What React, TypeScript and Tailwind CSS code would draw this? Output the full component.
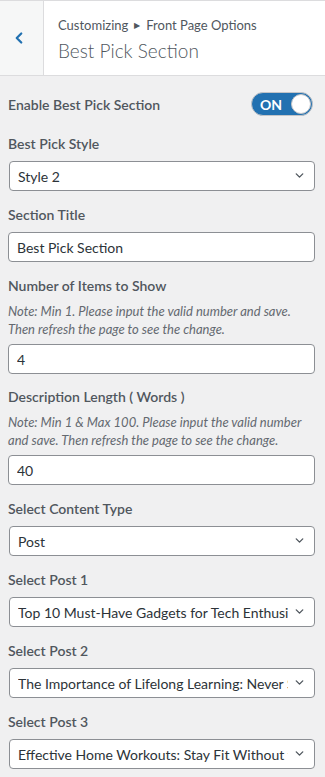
import { ChevronLeft, ChevronDown } from 'lucide-react';

const font = { fontFamily: 'Lato, "Open Sans", sans-serif' };

function Label({ children }: { children: React.ReactNode }) {
    return <div className="text-[14px] leading-[20px] font-semibold text-[#50575e] mb-[7px]">{children}</div>;
}

function Note({ children }: { children: React.ReactNode }) {
    return <div className="text-[13px] leading-[18px] italic text-[#646970] -mt-[1px] mb-[6px]">{children}</div>;
}

function Select({ value }: { value: string }) {
    return (
        <div className="relative ml-px">
            <select
                defaultValue={value}
                className="w-full h-[30px] appearance-none bg-white border border-[#8c8f94] rounded-[4px] pl-[8px] pr-[26px] text-[14px] text-[#2c3338] overflow-hidden text-clip whitespace-nowrap outline-none"
            >
                <option>{value}</option>
            </select>
            <ChevronDown className="absolute right-[9px] top-[8px] w-[13px] h-[13px] text-[#50575e] pointer-events-none" strokeWidth={2.5} />
        </div>
    );
}

function Input({ value }: { value: string }) {
    return (
        <input
            defaultValue={value}
            className="w-full h-[30px] bg-white border border-[#8c8f94] rounded-[4px] px-[8px] text-[14px] text-[#2c3338] outline-none"
        />
    );
}

export default function App() {
    return (
        <div className="w-[325px] min-h-[777px] bg-[#f0f0f1]" style={font}>
            {/* Header */}
            <div className="flex h-[76px] bg-white border-t border-b border-[#dcdcde]">
                <div className="w-[44px] flex items-center pl-[10px] bg-[#f6f7f7] border-r border-[#dcdcde]">
                    <ChevronLeft className="w-[18px] h-[18px] text-[#2271b1]" strokeWidth={3} />
                </div>
                <div className="pl-[14px] pt-[14px]">
                    <div className="text-[13px] leading-[20px] text-[#50575e] flex items-center gap-[6px]">
                        Customizing <span className="text-[8px]">▶</span> Front Page Options
                    </div>
                    <div className="text-[19px] leading-[28px] font-light text-[#50575e] mt-[2px]">Best Pick Section</div>
                </div>
            </div>

            <div className="pl-[8px] pr-[10px] pt-[16px]">
                {/* Toggle */}
                <div className="flex items-center justify-between h-[24px] mb-[18px]">
                    <div className="text-[14px] font-semibold text-[#50575e]">Enable Best Pick Section</div>
                    <div className="w-[62px] h-[24px] rounded-full bg-[#2271b1] border border-[#c3c4c7] flex items-center justify-between pl-[8px] pr-[1px] mr-[2px]">
                        <span className="text-[14px] font-bold text-white">ON</span>
                        <span className="w-[20px] h-[20px] rounded-full bg-white border border-[#c3c4c7]" />
                    </div>
                </div>

                <div className="mb-[14px]">
                    <Label>Best Pick Style</Label>
                    <Select value="Style 2" />
                </div>

                <div className="mb-[14px]">
                    <Label>Section Title</Label>
                    <Input value="Best Pick Section" />
                </div>

                <div className="mb-[13px]">
                    <Label>Number of Items to Show</Label>
                    <Note>Note: Min 1. Please input the valid number and save. Then refresh the page to see the change.</Note>
                    <Input value="4" />
                </div>

                <div className="mb-[14px]">
                    <Label>Description Length ( Words )</Label>
                    <Note>Note: Min 1 &amp; Max 100. Please input the valid number and save. Then refresh the page to see the change.</Note>
                    <Input value="40" />
                </div>

                <div className="mb-[14px]">
                    <Label>Select Content Type</Label>
                    <Select value="Post" />
                </div>

                <div className="mb-[14px]">
                    <Label>Select Post 1</Label>
                    <Select value="Top 10 Must-Have Gadgets for Tech Enthusiasts" />
                </div>

                <div className="mb-[14px]">
                    <Label>Select Post 2</Label>
                    <Select value="The Importance of Lifelong Learning: Never Stop Growing" />
                </div>

                <div className="mb-[14px]">
                    <Label>Select Post 3</Label>
                    <Select value="Effective Home Workouts: Stay Fit Without the Gym" />
                </div>
            </div>
        </div>
    );
}
